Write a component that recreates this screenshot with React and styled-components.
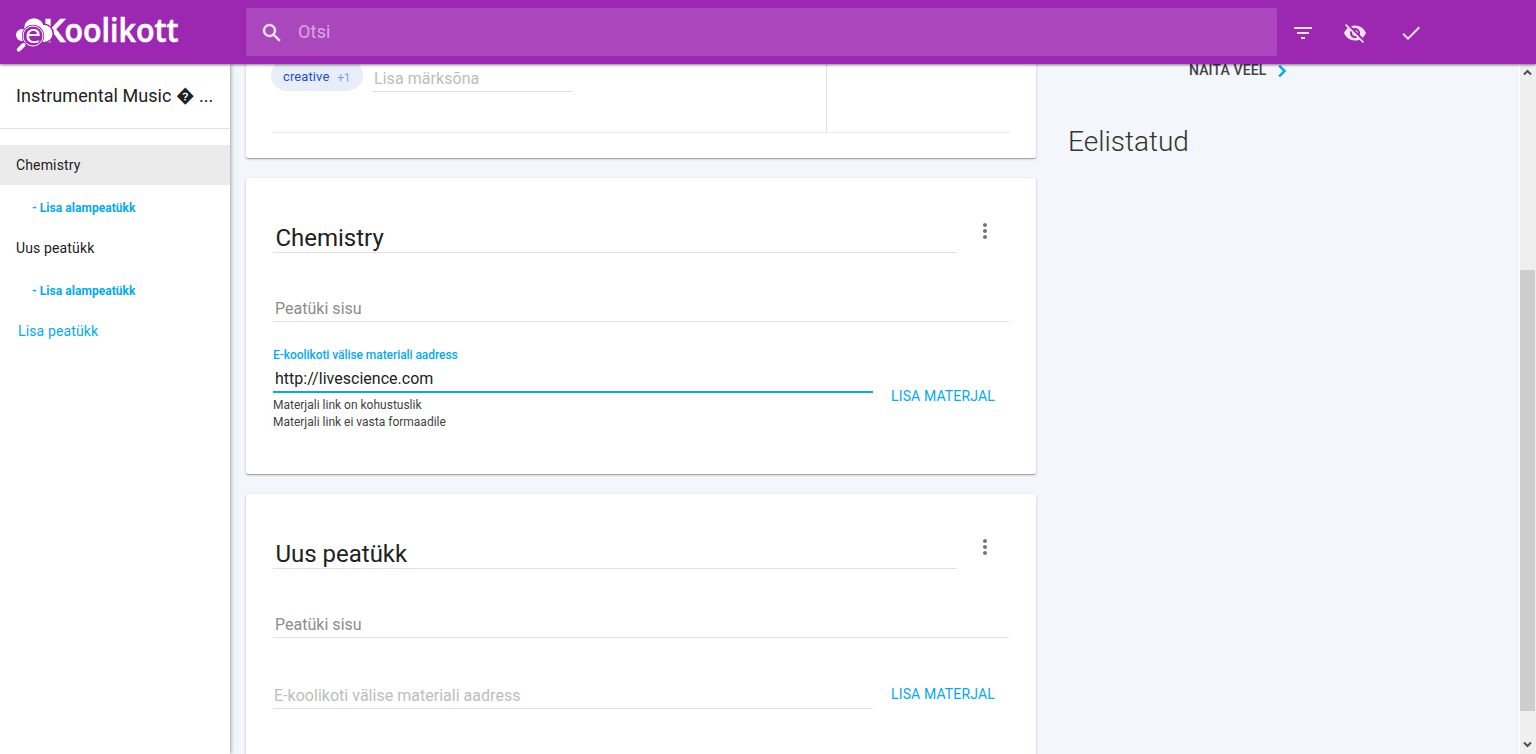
import React from 'react';
import styled, { createGlobalStyle, css } from 'styled-components';
import {
  MdSearch,
  MdFilterList,
  MdVisibilityOff,
  MdCheck,
  MdMoreVert,
  MdChevronRight,
} from 'react-icons/md';

const GlobalStyle = createGlobalStyle`
  *, *::before, *::after { box-sizing: border-box; }
  body {
    margin: 0;
    overflow: hidden;
    background: #f3f6fb;
    color: #212121;
    font-family: Roboto, "Noto Sans", sans-serif;
    font-size: 14px;
    letter-spacing: 0.1px;
  }
  svg { display: block; flex: none; }
`;

const Page = styled.div`
  height: 754px;
  display: flex;
  flex-direction: column;
  overflow: hidden;
`;

const Header = styled.header`
  position: relative;
  z-index: 3;
  flex: none;
  height: 64px;
  display: flex;
  align-items: center;
  background: #9c27b0;
  color: rgba(255, 255, 255, 0.87);
  box-shadow: 0 1px 3px rgba(0, 0, 0, 0.3), 0 1px 2px rgba(0, 0, 0, 0.25);
`;

const Brand = styled.a`
  width: 230px;
  height: 64px;
  flex: none;
`;

const SearchBox = styled.div`
  width: 1031px;
  height: 48px;
  margin-left: 16px;
  padding: 2px 14px 0;
  display: flex;
  align-items: center;
  gap: 14px;
  border-radius: 2px;
  background: #ab47bc;

  path:not([fill='none']) { stroke: currentColor; stroke-width: 0.4px; }
`;

const SearchHint = styled.span`
  font-size: 18px;
  line-height: 24px;
  margin-top: -3px;
  letter-spacing: 0.18px;
  color: rgba(255, 255, 255, 0.54);
`;

const HeaderActions = styled.div`
  display: flex;
  margin-left: 14px;
  padding-top: 2px;
`;

const IconButton = styled.button`
  padding: 0;
  border: 0;
  background: none;
  color: inherit;
  margin-right: ${(p) => p.$gap || 0}px;
`;

const Body = styled.div`
  flex: 1;
  min-height: 0;
  display: flex;
`;

const Sidebar = styled.nav`
  position: relative;
  z-index: 2;
  width: 230px;
  flex: none;
  background: #fff;
  box-shadow: 1px 0 4px rgba(0, 0, 0, 0.35);
`;

const SidebarTitle = styled.div`
  height: 65px;
  padding: 0 16px;
  margin-bottom: 16px;
  border-bottom: 1px solid #e0e0e0;
  font-size: 18px;
  line-height: 64px;
  letter-spacing: 0.05px;
  white-space: nowrap;
`;

const NavItem = styled.div`
  height: 40px;
  padding-left: ${(p) => (p.$link ? 18 : 16)}px;
  line-height: 41px;
  letter-spacing: 0.14px;
  color: ${(p) => (p.$link ? '#03a9f4' : 'inherit')};
  background: ${(p) => (p.$active ? '#ebebeb' : 'none')};
`;

const NavSubItem = styled.div`
  height: 43px;
  padding: 2px 0 0 32px;
  font-size: 12px;
  font-weight: 700;
  line-height: 43px;
  letter-spacing: 0.05px;
  color: #03a9f4;
`;

const Content = styled.main`
  width: 790px;
  flex: none;
  margin-left: 16px;
  overflow: visible;
`;

const Card = styled.section`
  height: ${(p) => p.$height}px;
  margin-bottom: 20px;
  padding: 0 27px;
  border-radius: 2px;
  background: #fff;
  box-shadow: 0 1px 3px rgba(0, 0, 0, 0.2), 0 1px 1px rgba(0, 0, 0, 0.14),
    0 2px 1px -1px rgba(0, 0, 0, 0.12);
`;

const TagCard = styled(Card)`
  margin-top: -20px;
  padding: 0 26px 0 25px;
`;

const TagColumns = styled.div`
  display: flex;
  height: 89px;
  margin-left: 1px;
  border-bottom: 1px solid #e8e8e8;
`;

const TagList = styled.div`
  width: 555px;
  margin-left: -1px;
  padding-top: 15px;
  display: flex;
  align-items: flex-start;
  gap: 10px;
  border-right: 1px solid #e0e0e0;
  box-sizing: content-box;
`;

const Chip = styled.div`
  width: 92px;
  height: 32px;
  padding: 0 12px;
  display: flex;
  justify-content: space-between;
  border-radius: 16px;
  background: #e8edf8;
  color: #1a4fd0;
  font-size: 13px;
  line-height: 35px;
`;

const ChipCount = styled.span`
  font-size: 12px;
  line-height: 38px;
  margin-right: 1px;
  letter-spacing: -0.4px;
  color: #7aa2f0;
`;

const TagInput = styled.div`
  width: 200px;
  height: 33px;
  padding-left: 1px;
  border-bottom: 1px solid #e0e0e0;
  font-size: 16px;
  line-height: 40px;
  letter-spacing: 0.05px;
  color: #bdbdbd;
`;

const ChapterHead = styled.div`
  height: 75px;
  padding-top: 40px;
  display: flex;
  gap: 16px;
`;

const ChapterTitle = styled.div`
  width: 684px;
  height: 35px;
  padding-left: 2.4px;
  border-bottom: 1px solid #e0e0e0;
  font-size: 24px;
  line-height: 40px;
  letter-spacing: 0;
`;

const MenuButton = styled(IconButton)`
  height: 24px;
  margin-top: 1px;
  color: #757575;
`;

const Field = styled.div`
  height: ${(p) => p.$height}px;
  padding-left: ${(p) => (p.$empty ? 1 : 2)}px;
  display: flex;
  flex-direction: column;
  justify-content: flex-end;
  border-bottom: ${(p) => (p.$focused ? '2px solid #03a9f4' : '1px solid #e0e0e0')};
  font-size: 16px;
  line-height: 24px;
  letter-spacing: 0.02px;
  ${(p) => p.$hint && css`color: #8c8c8c;`}
  ${(p) => p.$empty && css`color: #bdbdbd;`}
`;

const MaterialRow = styled.div`
  display: flex;
  gap: 18px;
`;

const UrlColumn = styled.div`
  width: 600px;
  flex: none;
`;

const FloatLabel = styled.label`
  margin: 0 0 1px -2px;
  font-size: 12px;
  font-weight: 500;
  line-height: 22px;
  letter-spacing: -0.06px;
  color: #03a9f4;
`;

const Errors = styled.div`
  padding-top: 4px;
  font-size: 12px;
  line-height: 17px;
  letter-spacing: 0;
  color: #424242;
`;

const AddButton = styled.button`
  height: 24px;
  margin-top: ${(p) => p.$top}px;
  padding: 0;
  border: 0;
  background: none;
  color: #03a9f4;
  font: 400 14px/24px Roboto, sans-serif;
  letter-spacing: 0.14px;
  text-transform: uppercase;
  white-space: nowrap;
`;

const Aside = styled.aside`
  flex: 1;
  padding-left: 32px;
`;

const ShowMore = styled.div`
  display: flex;
  align-items: center;
  height: 24px;
  margin: -5px 0 0 121px;
  font-weight: 500;
  letter-spacing: 0.14px;
  color: #424242;

  span { margin-top: -2px; width: 81px; white-space: nowrap; }
  svg { color: #03a9f4; }
  path:not([fill='none']) { stroke: currentColor; stroke-width: 0.6px; }
`;

const AsideTitle = styled.h2`
  margin: 39px 0 0;
  font-size: 28px;
  font-weight: 300;
  line-height: 40px;
  letter-spacing: 0;
  color: #333;
`;

const Scrollbar = styled.div`
  width: 17px;
  display: flex;
  flex-direction: column;
  border-left: 1px solid #fff;
  background: #efefef;
  color: #505050;
`;

const Thumb = styled.div`
  width: 15px;
  height: 441px;
  margin: 189px 0 25px;
  background: #cdcdcd;
`;

const ArrowSlot = styled.div`
  height: 17px;
  padding-right: 1px;
  display: flex;
  align-items: center;
  justify-content: center;
`;

const LogoText = styled.text`
  fill: #fff;
  font-family: "Open Sans", sans-serif;
  font-weight: ${(p) => p.$weight};
  font-size: ${(p) => p.$size}px;
  letter-spacing: 0;
`;

function Logo() {
  return (
    <svg width="190" height="64" viewBox="0 0 190 64">
      <LogoText $weight={600} $size={33} x="42.5" y="42" textLength="23" lengthAdjust="spacingAndGlyphs" stroke="#fff" strokeWidth="0.6">
        K
      </LogoText>
      <LogoText $weight={600} $size={32} x="64.5" y="42" textLength="114" lengthAdjust="spacingAndGlyphs" stroke="#fff" strokeWidth="0.6">
        oolikott
      </LogoText>
      <g fill="#9c27b0">
        <circle cx="34.500" cy="27.500" r="11" />
        <circle cx="44" cy="33.500" r="10" />
      </g>
      <g fill="#fff">
        <circle cx="22" cy="35" r="6" />
        <circle cx="34" cy="28" r="9.800" />
        <circle cx="44" cy="33.500" r="8.500" />
        <path d="M32 30h14v11h-7z" />
      </g>
      <circle cx="33" cy="36" r="11.200" fill="#9c27b0" />
      <circle cx="33" cy="36" r="10" fill="none" stroke="#fff" strokeWidth="1" />
      <path d="M24.300 44.300l-5.400 5.600" stroke="#9c27b0" strokeWidth="6" />
      <path d="M23.500 45l-4.700 4.700" stroke="#fff" strokeWidth="4" strokeLinecap="round" />
      <LogoText $weight={400} $size={25} x="25" y="42.700" textLength="16" lengthAdjust="spacingAndGlyphs">
        e
      </LogoText>
    </svg>
  );
}

function Arrow({ down }) {
  return (
    <ArrowSlot>
      <svg width="9" height="7" viewBox="0 0 9 7" fill="none" stroke="currentColor" strokeWidth="2">
        <path d={down ? 'M1 1.5l3.5 3.5L8 1.5' : 'M1 5.5L4.5 2 8 5.5'} />
      </svg>
    </ArrowSlot>
  );
}

function Chapter({ title, height, children }) {
  return (
    <Card $height={height}>
      <ChapterHead>
        <ChapterTitle>{title}</ChapterTitle>
        <MenuButton><MdMoreVert size={24} /></MenuButton>
      </ChapterHead>
      <Field $height={69} $hint>Peatüki sisu</Field>
      {children}
    </Card>
  );
}

export default function App() {
  return (
    <Page>
      <GlobalStyle />
      <Header>
        <Brand><Logo /></Brand>
        <SearchBox>
          <MdSearch size={24} />
          <SearchHint>Otsi</SearchHint>
        </SearchBox>
        <HeaderActions>
          <IconButton $gap={28}><MdFilterList size={24} /></IconButton>
          <IconButton $gap={32}><MdVisibilityOff size={24} /></IconButton>
          <IconButton><MdCheck size={24} /></IconButton>
        </HeaderActions>
      </Header>
      <Body>
        <Sidebar>
          <SidebarTitle>Instrumental Music � ...</SidebarTitle>
          <NavItem $active>Chemistry</NavItem>
          <NavSubItem>- Lisa alampeatükk</NavSubItem>
          <NavItem>Uus peatükk</NavItem>
          <NavSubItem>- Lisa alampeatükk</NavSubItem>
          <NavItem $link>Lisa peatükk</NavItem>
        </Sidebar>
        <Content>
          <TagCard $height={114}>
            <TagColumns>
              <TagList>
                <Chip>creative <ChipCount>+1</ChipCount></Chip>
                <TagInput>Lisa märksõna</TagInput>
              </TagList>
            </TagColumns>
          </TagCard>
          <Chapter title="Chemistry" height={296}>
            <MaterialRow>
              <UrlColumn>
                <Field $height={71} $focused>
                  <FloatLabel>E-koolikoti välise materiali aadress</FloatLabel>
                  http://livescience.com
                </Field>
                <Errors>
                  <div>Materjali link on kohustuslik</div>
                  <div>Materjali link ei vasta formaadile</div>
                </Errors>
              </UrlColumn>
              <AddButton $top={62}>Lisa materjal</AddButton>
            </MaterialRow>
          </Chapter>
          <Chapter title="Uus peatükk" height={296}>
            <MaterialRow>
              <UrlColumn>
                <Field $height={71} $empty>E-koolikoti välise materiali aadress</Field>
              </UrlColumn>
              <AddButton $top={44}>Lisa materjal</AddButton>
            </MaterialRow>
          </Chapter>
        </Content>
        <Aside>
          <ShowMore>
            <span>NÄITA VEEL</span>
            <MdChevronRight size={24} />
          </ShowMore>
          <AsideTitle>Eelistatud</AsideTitle>
        </Aside>
        <Scrollbar>
          <Arrow />
          <Thumb />
          <Arrow down />
        </Scrollbar>
      </Body>
    </Page>
  );
}
